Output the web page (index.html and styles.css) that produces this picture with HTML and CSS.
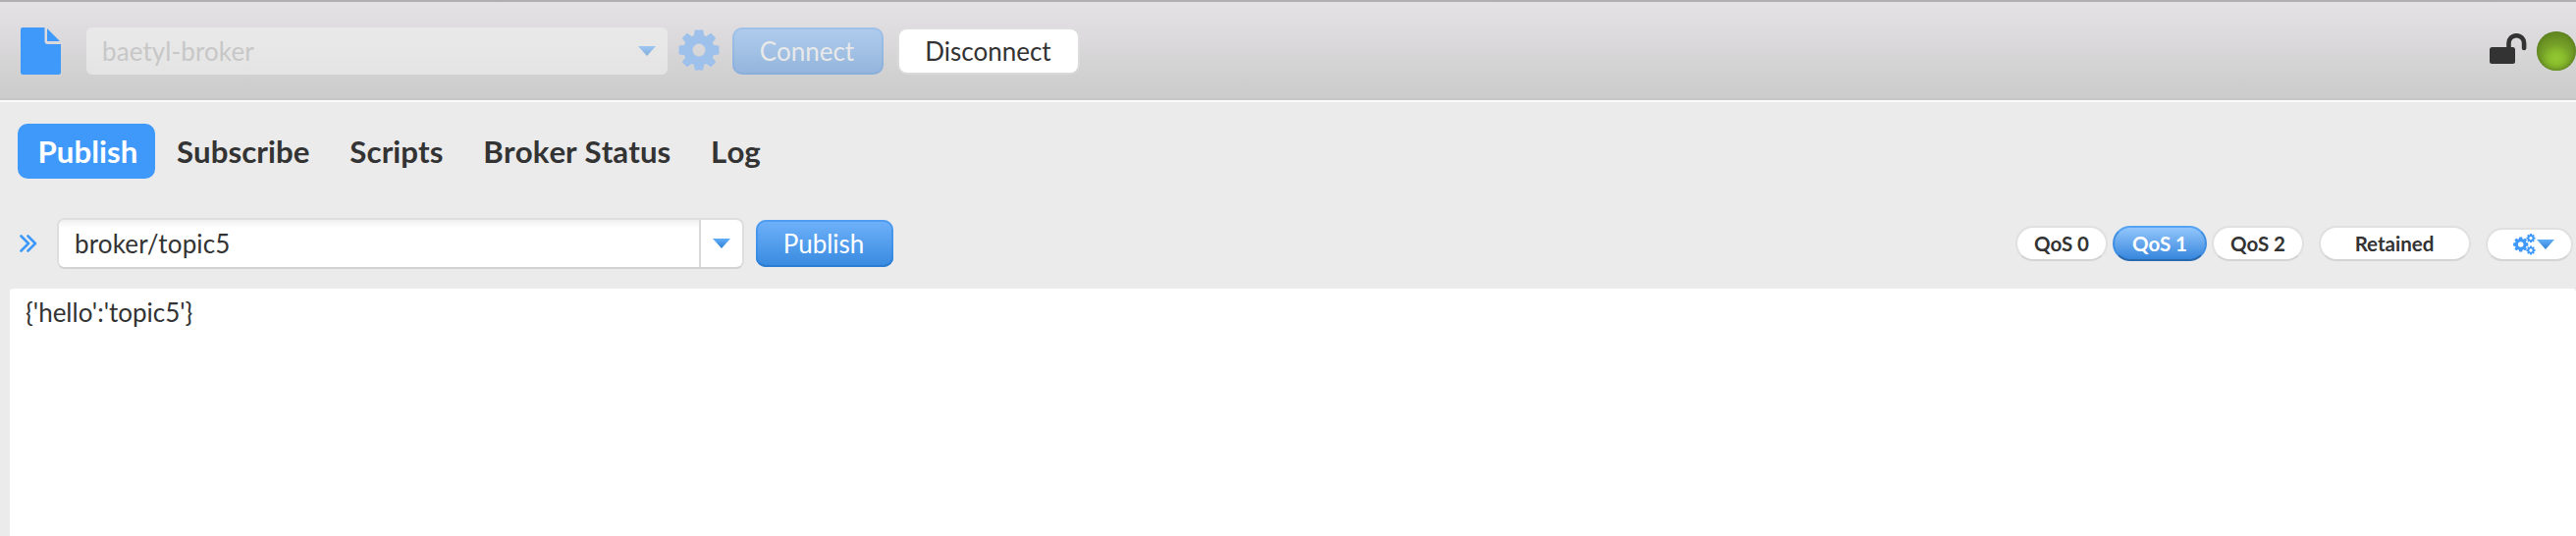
FILE: index.html
```html
<!DOCTYPE html>
<html lang="en">
<head>
<meta charset="utf-8">
<title>baetyl-broker</title>
<link rel="stylesheet" href="styles.css">
</head>
<body>
<svg class="defs" width="0" height="0">
  <defs>
    <linearGradient id="arrow" x1="0" y1="0" x2="0" y2="1"><stop offset="0" stop-color="#61aef9"/><stop offset="1" stop-color="#3180d3"/></linearGradient>
    <path id="gear" fill-rule="evenodd" d="M-4.200-20.500H4.200L5.200-14.800L7.400-13.900L12.200-17.200L17.200-12.200L13.900-7.400L14.800-5.200L20.500-4.200V4.200L14.800 5.200L13.900 7.400L17.200 12.200L12.200 17.200L7.400 13.900L5.200 14.800L4.200 20.500H-4.200L-5.200 14.800L-7.400 13.900L-12.200 17.200L-17.200 12.200L-13.900 7.400L-14.800 5.200L-20.500 4.200V-4.200L-14.800-5.200L-13.900-7.400L-17.200-12.200L-12.200-17.200L-7.400-13.900L-5.200-14.800ZM0-6.500A6.500 6.500 0 1 0 0 6.500A6.500 6.500 0 1 0 0-6.500Z"/>
    <path id="gear-small" fill-rule="evenodd" d="M-4.200-20.500H4.200L5.200-14.800L7.400-13.900L12.200-17.200L17.200-12.200L13.900-7.400L14.800-5.200L20.500-4.200V4.200L14.800 5.200L13.900 7.400L17.200 12.200L12.200 17.200L7.400 13.900L5.200 14.800L4.200 20.500H-4.200L-5.200 14.800L-7.400 13.900L-12.200 17.200L-17.200 12.200L-13.900 7.400L-14.800 5.200L-20.500 4.200V-4.200L-14.800-5.200L-13.900-7.400L-17.200-12.200L-12.200-17.200L-7.400-13.900L-5.200-14.800ZM0-7.500A7.500 7.500 0 1 0 0 7.500A7.500 7.500 0 1 0 0-7.500Z"/>
  </defs>
</svg>
<header class="toolbar">
  <svg class="file-icon" viewBox="0 0 42 48"><path d="M2 0H24.500V14Q24.500 17 27.500 17H41V45.500Q41 48 38.500 48H2.500Q0 48 0 45.500V2Q0 0 2 0Z"/><path d="M27 1L40 14H27Z"/></svg>
  <div class="profile"><span>baetyl-broker</span><svg class="arrow" viewBox="0 0 18 10"><path d="M0 0H18L9 10Z"/></svg></div>
  <svg class="settings" viewBox="-21 -21 42 42"><use href="#gear"/></svg>
  <button class="btn connect">Connect</button>
  <button class="btn disconnect">Disconnect</button>
  <svg class="lock" viewBox="0 0 38 32"><rect x="0" y="14" width="26" height="17" rx="2.500"/><path d="M19.500 15V10A7.800 7.800 0 0 1 35.100 10V15"/></svg>
  <span class="status"></span>
</header>
<nav class="tabs">
  <a class="tab active">Publish</a><a class="tab">Subscribe</a><a class="tab">Scripts</a><a class="tab">Broker Status</a><a class="tab">Log</a>
</nav>
<section class="publish-bar">
  <svg class="chevrons" viewBox="0 0 18 18"><path d="M1.500 1.500L9 9L1.500 16.500M8.500 1.500L16 9L8.500 16.500"/></svg>
  <div class="topic"><span class="topic-text">broker/topic5</span><span class="topic-drop"><svg class="arrow" viewBox="0 0 18 10"><path d="M0 0H18L9 10Z"/></svg></span></div>
  <button class="btn publish">Publish</button>
  <div class="options">
    <span class="pill">QoS 0</span><span class="pill on">QoS 1</span><span class="pill">QoS 2</span><span class="pill retained">Retained</span>
    <span class="pill more"><svg class="gears" viewBox="0 0 23 22"><use href="#gear-small" transform="translate(7.700 11) scale(.37)"/><use href="#gear-small" transform="translate(18 4.600) scale(.22)"/><use href="#gear-small" transform="translate(18 17) scale(.22)"/></svg><svg class="arrow" viewBox="0 0 18 10"><path d="M0 0H18L9 10Z"/></svg></span>
  </div>
</section>
<main class="payload">{'hello':'topic5'}</main>
</body>
</html>
```
FILE: styles.css
```css
* { box-sizing: border-box; }
body { margin: 0; height: 546px; overflow: hidden; display: flex; flex-direction: column; background: #ebebeb; color: #333; font: 26px/32px Lato, sans-serif; }
svg { display: block; flex: none; }
.defs { position: absolute; }
.toolbar { height: 104px; flex: none; display: flex; align-items: center; padding-left: 21px; border-top: 2px solid #b0aeb0; border-bottom: 2px solid #fbfbfb; background: linear-gradient(#e5e2e5, #cbcbcb); box-shadow: inset 0 -2px #c5c5c5; }
.file-icon { width: 42px; height: 48px; margin-right: 25px; fill: #3f99fa; }
.profile { width: 592px; height: 48px; margin-right: 11px; padding: 0 12px 0 16px; display: flex; align-items: center; justify-content: space-between; border-radius: 6px; background: linear-gradient(#eae9ea, #e4e4e4); color: #c7c7c7; letter-spacing: .1px; }
.arrow { width: 18px; height: 10px; fill: url(#arrow); }
.profile .arrow { opacity: .55; }
.settings { width: 42px; height: 42px; margin: 0 13px 2px 0; fill: #9dc1eb; }
.btn { height: 48px; padding: 0; border: 0; border-radius: 10px; font: inherit; color: #fff; text-align: center; }
.connect { width: 154px; padding-right: 2px; margin-right: 16px; background: linear-gradient(#b0cdee, #93b4db); box-shadow: inset 0 0 0 2px rgba(110,160,220,.25); color: #e9e9e9; }
.disconnect { width: 182px; height: 44px; padding-right: 1px; border-radius: 8px; background: #fff; color: #333; box-shadow: 0 0 0 2px rgba(225,225,225,.5); }
.lock { width: 38px; height: 32px; margin: 0 10px 4px auto; fill: #333; }
.lock path { fill: none; stroke: #333; stroke-width: 4.600; stroke-linecap: round; }
.status { width: 40px; height: 40px; flex: none; border-radius: 50%; background: radial-gradient(ellipse 60% 55% at 50% 68%, #93c832 0, #8abd2d 30%, #749f28 65%, #688f23 100%); box-shadow: inset 0 0 5px #55761c; }
.tabs { height: 56px; flex: none; margin: 22px 0 0 18px; display: flex; font-size: 31.200px; font-weight: 700; line-height: 56px; font-kerning: none; letter-spacing: .07px; }
.tab { padding: 0 20.400px; }
.tab.active { width: 140px; margin-right: 1.500px; border-radius: 10px; background: #3f99fa; color: #fff; }
.publish-bar { height: 52px; flex: none; margin-top: 40px; padding-left: 20px; display: flex; align-items: center; }
.chevrons { width: 18px; height: 18px; margin-right: 20px; fill: none; stroke: #3f99fa; stroke-width: 2.600; stroke-linecap: round; stroke-linejoin: round; }
.topic { width: 700px; height: 52px; margin-right: 12px; display: flex; border: 2px solid #dedede; border-bottom-color: #d2d2d2; border-radius: 8px; background: #fff; }
.topic-text { flex: 1; padding-left: 16px; line-height: 49px; letter-spacing: .15px; background: linear-gradient(#f0f0f0, #fff 8px); border-radius: 6px 0 0 6px; }
.topic-drop { width: 44px; border-left: 2px solid #d9d9d9; display: grid; place-items: center; }
.publish { width: 140px; padding-right: 2px; background: linear-gradient(#70b2fa, #3789df); box-shadow: inset 0 0 0 2px rgba(40,130,230,.45), inset 0 -2px #2f78c5; }
.options { margin-left: auto; padding-right: 3px; display: flex; align-items: flex-start; font-size: 20.500px; font-weight: 700; }
.pill { width: 94px; height: 36px; border: 2px solid #e0e0e0; border-bottom-color: #d4d4d4; border-radius: 18px; background: #fff; line-height: 33px; text-align: center; }
.on { width: 96px; margin: 0 5px; border-color: #55a4f4 #3f8ee2 #2a69ad; background: linear-gradient(#93c6fb, #3686dd); color: #fff; }
.retained { width: 155px; padding-right: 1px; margin: 0 15px; }
.more { width: 89px; height: 34px; margin-top: 2px; padding-left: 8px; display: flex; align-items: center; justify-content: center; gap: 1px; }
.gears { width: 23px; height: 22px; fill: #3f99fa; }
.payload { flex: 1; margin: 20px 0 0 10px; padding: 8px 16px; border-radius: 4px 4px 0 0; background: #fff; }
```
